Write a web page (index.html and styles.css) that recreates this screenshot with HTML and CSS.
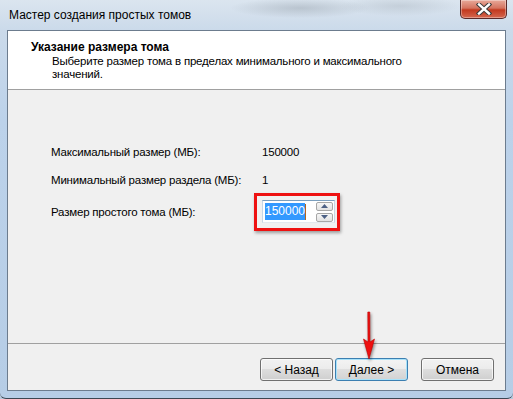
FILE: index.html
```html
<!DOCTYPE html>
<html lang="ru">
<head>
	<meta charset="UTF-8">
	<title>Мастер создания простых томов</title>
	<link rel="stylesheet" href="styles.css">
</head>
<body>
<div class="window">
	<div class="titlebar">
		<span class="title">Мастер создания простых томов</span>
		<span class="close">
			<svg width="16" height="12" viewBox="0 0 16 12">
				<path d="M3 1.5 L13 10.5 M13 1.5 L3 10.5" stroke="#3a3a3a" stroke-width="4.4" stroke-linecap="square"/>
				<path d="M3 1.5 L13 10.5 M13 1.5 L3 10.5" stroke="#fff" stroke-width="2.4" stroke-linecap="square"/>
			</svg>
		</span>
	</div>
	<div class="client">
		<div class="header">
			<h1>Указание размера тома</h1>
			<p>Выберите размер тома в пределах минимального и максимального<br>значений.</p>
		</div>
		<div class="body">
			<div class="form">
				<span>Максимальный размер (МБ):</span>
				<span>150000</span>
				<span>Минимальный размер раздела (МБ):</span>
				<span>1</span>
				<span>Размер простого тома (МБ):</span>
				<span class="field">
					<span class="spin-input"><span class="sel">150000</span><span class="caret"></span></span>
					<span class="spin">
						<span class="spin-btn"><svg width="7" height="4" viewBox="0 0 7 4"><path d="M0 4 L3.5 0 L7 4 Z" fill="#4d6185"/></svg></span>
						<span class="spin-btn"><svg width="7" height="4" viewBox="0 0 7 4"><path d="M0 0 L3.5 4 L7 0 Z" fill="#4d6185"/></svg></span>
					</span>
					<span class="mark"></span>
				</span>
			</div>
		</div>
		<div class="footer">
			<button class="btn">&lt; Назад</button>
			<button class="btn default">Далее &gt;</button>
			<button class="btn cancel">Отмена</button>
		</div>
	</div>
	<svg class="arrow" width="20" height="50" viewBox="0 0 20 50">
		<path d="M8.8 1 L10.8 1 L11 31 L15.5 28 L10 48 L4.5 28 L9 31 Z" fill="#ee1111" stroke="#c00000" stroke-width="0.6"/>
	</svg>
</div>
</body>
</html>
```

FILE: styles.css
```css
*{margin: 0; padding: 0; box-sizing: border-box}
html,body{
	width: 513px;
	height: 399px;
	overflow: hidden;
	background: #b7c9dc;
}
body{
	font-family: "Liberation Sans", Arial, sans-serif;
	font-size: 11.5px;
	letter-spacing: -0.2px;
	color: #000;
}
.window{
	position: relative;
	width: 513px;
	height: 399px;
	padding: 0 7px 7px 7px;
	display: flex;
	flex-direction: column;
	border-bottom: 1px solid #3c4652;
	border-radius: 0 0 6px 6px;
	background:
		radial-gradient(ellipse 70px 10px at 300px 8px, rgba(150,160,170,.45), transparent),
		radial-gradient(ellipse 60px 10px at 400px 6px, rgba(160,170,180,.35), transparent),
		linear-gradient(180deg, #dbe5ef 0, #cbdaea 30px, #bcd2ea 120px, #b6cde6 399px);
}
.titlebar{
	height: 30px;
	display: flex;
	justify-content: space-between;
	align-items: flex-start;
}
.title{
	margin: 7px 0 0 2px;
	line-height: 16px;
	font-size: 12px;
	letter-spacing: 0;
	white-space: nowrap;
}
.close{
	width: 47px;
	height: 19px;
	margin-right: -1px;
	display: flex;
	align-items: center;
	justify-content: center;
	border: 1px solid #5a2a2a;
	border-top: 0;
	border-radius: 0 0 5px 5px;
	background: linear-gradient(180deg, #e8a99a 0, #d4735f 45%, #c2391f 55%, #d5674f 100%);
	box-shadow: inset 0 0 0 1px rgba(255,255,255,.35);
}
.client{
	flex: 1;
	display: flex;
	flex-direction: column;
	border: 1px solid #6c7c8e;
	background: #f0f0f0;
}
.header{
	height: 59px;
	background: #fff;
	border-bottom: 1px solid #a0a0a0;
	padding: 8px 0 0 23px;
}
.header h1{
	font-size: 12px;
	font-weight: bold;
	line-height: 16px;
	letter-spacing: 0;
}
.header p{
	padding-left: 21px;
	line-height: 13px;
	white-space: nowrap;
}
.body{
	height: 254px;
	padding: 54px 0 0 43px;
	border-bottom: 1px solid #a0a0a0;
}
.form{
	display: grid;
	grid-template-columns: 211px auto;
	row-gap: 12px;
	align-items: center;
	line-height: 16px;
	white-space: nowrap;
}
.field{
	position: relative;
	width: 73px;
	height: 23px;
	display: flex;
	align-items: center;
	justify-content: space-between;
	padding: 0 1px 0 2px;
	background: #fff;
	border: 1px solid #abadb3;
	border-top-color: #7b9ebd;
	border-left-color: #c7d6e4;
	border-right-color: #c7d6e4;
	border-bottom-color: #e3e9ef;
}
.spin-input{
	display: flex;
	align-items: center;
}
.sel{
	background: #3399ff;
	color: #fff;
	line-height: 17px;
	font-size: 12px;
	letter-spacing: 0;
}
.caret{
	width: 1px;
	height: 16px;
	background: #b4661e;
}
.spin{
	display: flex;
	flex-direction: column;
	gap: 2px;
}
.spin-btn{
	width: 17px;
	height: 9px;
	display: flex;
	align-items: center;
	justify-content: center;
	border: 1px solid #a7a7a7;
	border-radius: 2px;
	background: linear-gradient(180deg, #f7f7f7, #e2e2e2);
}
.mark{
	position: absolute;
	left: -9px;
	top: -8px;
	width: 86px;
	height: 38px;
	border: 3px solid #ee1111;
	box-shadow: 1px 2px 3px rgba(0,0,0,.35);
}
.footer{
	flex: 1;
	display: flex;
	justify-content: flex-end;
	align-items: flex-start;
	padding: 14px 11px 0 0;
}
.btn{
	width: 73px;
	height: 23px;
	font-family: inherit;
	font-size: 12px;
	color: #000;
	border: 1px solid #707070;
	border-radius: 3px;
	background: linear-gradient(180deg, #f2f2f2 0, #ebebeb 50%, #dddddd 50%, #cfcfcf 100%);
	box-shadow: inset 0 0 0 1px rgba(255,255,255,.7);
}
.btn + .btn{
	margin-left: 2px;
}
.btn.default{
	border-color: #3c7fb1;
	box-shadow: inset 0 0 0 1px #a7e2fa;
	background: linear-gradient(180deg, #f4f4f4 0, #ececec 50%, #dfdfdf 50%, #d2d2d2 100%);
}
.btn.cancel{
	margin-left: 13px;
}
.arrow{
	position: absolute;
	left: 359px;
	top: 311px;
	filter: drop-shadow(1px 2px 1.5px rgba(0,0,0,.45));
}
```
